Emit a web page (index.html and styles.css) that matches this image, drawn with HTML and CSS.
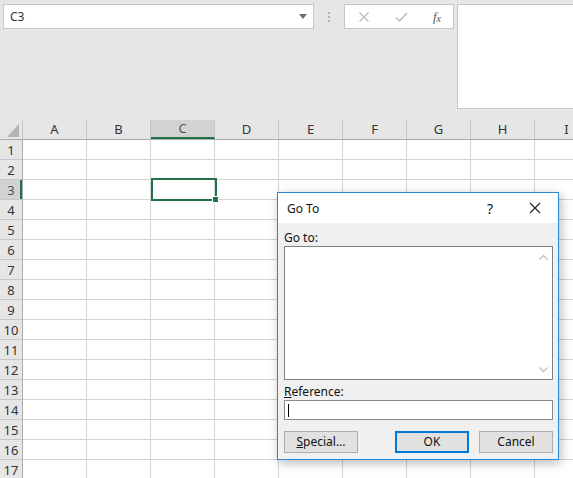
FILE: index.html
```html
<!DOCTYPE html>
<html>
<head>
<meta charset="utf-8">
<link rel="stylesheet" href="styles.css">
</head>
<body>
<div class="app">
  <div class="ribbon">
    <div class="namebox">
      <span class="nb-text">C3</span>
      <svg class="nb-arrow" width="8" height="5" viewBox="0 0 8 5"><path d="M0 0h8L4 5z" fill="#6d6d6d"/></svg>
    </div>
    <div class="grip"><i></i><i></i><i></i></div>
    <div class="fxbox">
      <svg width="12" height="12" viewBox="0 0 12 12"><path d="M1.5 1.5l9 9M10.5 1.5l-9 9" stroke="#b8b8b8" stroke-width="1.2"/></svg>
      <svg width="13" height="12" viewBox="0 0 13 12"><path d="M1 6.5l3.5 3.5L12 2" stroke="#b8b8b8" stroke-width="1.4" fill="none"/></svg>
      <span class="fx">f<sub>x</sub></span>
    </div>
    <div class="formula"></div>
  </div>

  <div class="sheet">
    <div class="colheads">
      <div class="corner"><svg width="23" height="19" viewBox="0 0 23 19"><path d="M19 4V17H7z" fill="#b4b4b4"/></svg></div>
      <div class="ch">A</div><div class="ch">B</div><div class="ch sel">C</div><div class="ch">D</div><div class="ch">E</div><div class="ch">F</div><div class="ch">G</div><div class="ch">H</div><div class="ch">I</div>
    </div>
    <div class="body">
      <div class="rowheads">
        <div class="rh">1</div><div class="rh">2</div><div class="rh sel">3</div><div class="rh">4</div><div class="rh">5</div><div class="rh">6</div><div class="rh">7</div><div class="rh">8</div><div class="rh">9</div><div class="rh">10</div><div class="rh">11</div><div class="rh">12</div><div class="rh">13</div><div class="rh">14</div><div class="rh">15</div><div class="rh">16</div><div class="rh">17</div>
      </div>
      <div class="cells">
        <div class="cursor"><span class="handle"></span></div>
      </div>
    </div>
  </div>

  <div class="dialog">
    <div class="titlebar">
      <span class="title">Go To</span>
      <span class="help">?</span>
      <svg class="close" width="12" height="12" viewBox="0 0 12 12"><path d="M1 1l10 10M11 1L1 11" stroke="#222" stroke-width="1.1"/></svg>
    </div>
    <div class="dbody">
      <div class="label">Go to:</div>
      <div class="listbox">
        <div class="scroll">
          <svg width="9" height="6" viewBox="0 0 9 6"><path d="M0.5 5.5L4.5 1.5L8.5 5.5" stroke="#c2c2c2" stroke-width="1.3" fill="none"/></svg>
          <svg width="9" height="6" viewBox="0 0 9 6"><path d="M0.5 0.5L4.5 4.5L8.5 0.5" stroke="#c2c2c2" stroke-width="1.3" fill="none"/></svg>
        </div>
      </div>
      <div class="label ref"><u>R</u>eference:</div>
      <div class="input"><span class="caret"></span></div>
      <div class="buttons">
        <div class="btn"><u>S</u>pecial...</div>
        <div class="btn ok">OK</div>
        <div class="btn">Cancel</div>
      </div>
    </div>
  </div>
</div>
</body>
</html>
```

FILE: styles.css
```css
html, body {
  margin: 0;
  padding: 0;
  overflow: hidden;
}
body {
  width: 573px;
  height: 478px;
  font-family: "Noto Sans", "Segoe UI", sans-serif;
  font-size: 12px;
  color: #222;
  background: #fff;
}
.app {
  position: relative;
  width: 573px;
  height: 478px;
  overflow: hidden;
}

/* Ribbon / formula bar */
.ribbon {
  height: 120px;
  background: #e6e6e6;
  display: flex;
  align-items: flex-start;
  padding-top: 4px;
  box-sizing: border-box;
}
.namebox {
  margin-left: 3px;
  width: 311px;
  height: 25px;
  box-sizing: border-box;
  border: 1px solid #c6c6c6;
  background: #fff;
  display: flex;
  align-items: center;
  padding: 0 5px 0 6px;
}
.nb-text {
  flex: 1;
  font-size: 12px;
  color: #333;
}
.nb-arrow {
  margin-right: 1px;
}
.grip {
  width: 30px;
  height: 25px;
  display: flex;
  flex-direction: column;
  align-items: center;
  justify-content: center;
  gap: 2px;
}
.grip i {
  display: block;
  width: 2px;
  height: 2px;
  background: #b0b0b0;
}
.fxbox {
  width: 110px;
  height: 25px;
  box-sizing: border-box;
  border: 1px solid #c6c6c6;
  background: #fff;
  display: flex;
  align-items: center;
  justify-content: space-between;
  padding: 0 12px 0 13px;
}
.fx {
  font-family: "Liberation Serif", serif;
  font-style: italic;
  font-size: 13px;
  color: #555;
  line-height: 1;
}
.fx sub {
  font-size: 10px;
  vertical-align: -1px;
}
.formula {
  margin-left: 3px;
  flex: 1;
  height: 105px;
  box-sizing: border-box;
  border: 1px solid #c6c6c6;
  border-right: none;
  background: #fff;
}

/* Sheet */
.colheads {
  display: flex;
  height: 20px;
  background: #e6e6e6;
  border-bottom: 1px solid #ababab;
  box-sizing: border-box;
}
.corner {
  width: 23px;
  flex: none;
  box-sizing: border-box;
  border-right: 1px solid #c6c6c6;
}
.corner svg {
  display: block;
}
.ch {
  width: 64px;
  flex: none;
  box-sizing: border-box;
  border-right: 1px solid #c6c6c6;
  text-align: center;
  font-size: 13px;
  line-height: 19px;
  color: #333;
}
.ch.sel {
  background: #d2d2d2;
  border-bottom: 2px solid #217346;
  line-height: 17px;
  color: #555;
}
.body {
  display: flex;
}
.rowheads {
  width: 23px;
  flex: none;
  background: #e6e6e6;
  border-right: 1px solid #ababab;
  box-sizing: border-box;
}
.rh {
  height: 20px;
  box-sizing: border-box;
  border-bottom: 1px solid #c6c6c6;
  text-align: center;
  font-size: 13px;
  line-height: 20px;
  color: #333;
}
.rh.sel {
  background: #d2d2d2;
  box-shadow: inset -2px 0 0 #217346;
  color: #555;
}
.cells {
  position: relative;
  flex: 1;
  height: 340px;
  background-image:
    linear-gradient(to right, transparent 63px, #d4d4d4 63px),
    linear-gradient(to bottom, transparent 19px, #d4d4d4 19px);
  background-size: 64px 100%, 100% 20px;
}
.cursor {
  position: absolute;
  left: 128px;
  top: 38px;
  width: 66px;
  height: 23px;
  box-sizing: border-box;
  border: 2px solid #217346;
}
.handle {
  position: absolute;
  right: -4px;
  bottom: -4px;
  width: 5px;
  height: 5px;
  background: #217346;
  border: 1px solid #fff;
}

/* Dialog */
.dialog {
  position: absolute;
  left: 277px;
  top: 192px;
  width: 282px;
  height: 268px;
  box-sizing: border-box;
  border: 1px solid #2b89d5;
  background: #f0f0f0;
  box-shadow: 2px 3px 10px rgba(0, 0, 0, 0.28);
  display: flex;
  flex-direction: column;
}
.titlebar {
  height: 30px;
  background: #fff;
  display: flex;
  align-items: center;
  padding-left: 9px;
  flex: none;
}
.title {
  flex: 1;
  font-size: 12px;
  color: #111;
}
.help {
  font-size: 14px;
  color: #111;
  margin-right: 36px;
}
.close {
  margin-right: 17px;
}
.dbody {
  flex: 1;
  padding: 0 5px 0 6px;
  display: flex;
  flex-direction: column;
}
.label {
  height: 17px;
  line-height: 17px;
  margin-top: 6px;
  font-size: 12px;
  color: #111;
}
.listbox {
  height: 134px;
  box-sizing: border-box;
  border: 1px solid #828282;
  background: #fff;
  display: flex;
  justify-content: flex-end;
}
.scroll {
  width: 17px;
  display: flex;
  flex-direction: column;
  justify-content: space-between;
  align-items: center;
  padding: 7px 0 6px;
}
.scroll svg {
  display: block;
}
.label.ref {
  margin-top: 3px;
}
.input {
  height: 20px;
  box-sizing: border-box;
  border: 1px solid #8a8a8a;
  background: #fff;
  display: flex;
  align-items: center;
  padding-left: 3px;
}
.caret {
  width: 1px;
  height: 13px;
  background: #000;
}
.buttons {
  margin-top: 11px;
  display: flex;
  justify-content: space-between;
}
.btn {
  width: 74px;
  height: 22px;
  box-sizing: border-box;
  border: 1px solid #adadad;
  background: #e1e1e1;
  text-align: center;
  line-height: 20px;
  font-size: 12px;
  color: #111;
}
.btn.ok {
  border: 2px solid #0078d7;
  line-height: 18px;
  margin-left: 36px;
}
.btn.ok + .btn {
  margin-left: 10px;
}
.buttons .btn:first-child {
  margin-right: auto;
}
```
